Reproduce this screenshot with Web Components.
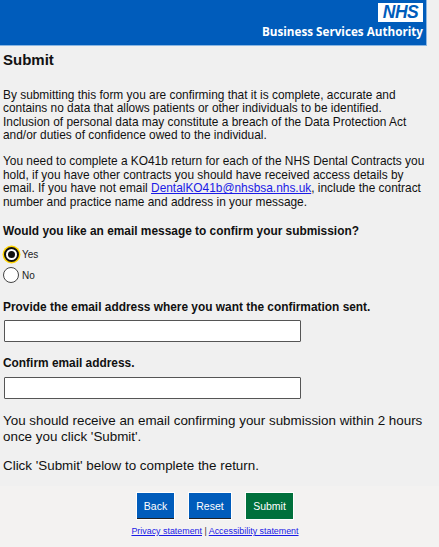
<!DOCTYPE html>
<html lang="en">
<head>
  <meta charset="UTF-8">
  <title>Submit</title>
  <style>
    html, body { margin: 0; padding: 0; background: #f0f0f0; }
    body { width: 439px; height: 547px; overflow: hidden; font-family: "Liberation Sans", Arial, sans-serif; color: #111; }
  </style>
</head>
<body>

<nhs-header></nhs-header>

<main-form>
  <h-title>Submit</h-title>
  <text-para style="--size:11.9px">By submitting this form you are confirming that it is complete, accurate and contains no data that allows patients or other individuals to be identified. Inclusion of personal data may constitute a breach of the Data Protection Act and/or duties of confidence owed to the individual.</text-para>
  <text-para style="--gap:12.75px;--size:11.9px">You need to complete a KO41b return for each of the NHS Dental Contracts you hold, if you have other contracts you should have received access details by email. If you have not email <a href="#" style="color:#1a1ae6">DentalKO41b@nhsbsa.nhs.uk</a>, include the contract number and practice name and address in your message.</text-para>
  <radio-group legend="Would you like an email message to confirm your submission?"></radio-group>
  <email-field label="Provide the email address where you want the confirmation sent." style="--top:13px;--under:5px"></email-field>
  <email-field label="Confirm email address." style="--top:13px;--under:6px"></email-field>
  <text-para style="--gap:14px;--size:13.4px;--lh:16px">You should receive an email confirming your submission within 2 hours once you click 'Submit'.</text-para>
  <text-para style="--gap:13px;--size:13.4px;--lh:16px">Click 'Submit' below to complete the return.</text-para>
</main-form>

<page-footer></page-footer>

<script>
  // Blue banner with the logo on the right
  class NhsHeader extends HTMLElement {
    constructor() {
      super();
      this.attachShadow({ mode: 'open' }).innerHTML = `
        <style>
          :host { display: flex; flex-direction: column; align-items: flex-end; box-sizing: border-box; width: 427px; height: 46px; background: #005cbb; color: #fff; padding: 3px 3px 0 0; border-bottom: 1px solid #8ab6e2; border-right: 1px solid #8ab6e2; }
          .logo { box-sizing: border-box; width: 45px; height: 19px; background: #fff; color: #005cbb; font: italic bold 17.5px/19px "Liberation Sans", Arial, sans-serif; text-align: center; letter-spacing: -0.5px; }
          .name { font: bold 11.7px/16px "Open Sans", "Liberation Sans", sans-serif; margin-top: 1px; white-space: nowrap; }
        </style>
        <div class="logo">NHS</div>
        <div class="name">Business Services Authority</div>`;
    }
  }

  // Column that holds the form content
  class MainForm extends HTMLElement {
    constructor() {
      super();
      this.attachShadow({ mode: 'open' }).innerHTML = `
        <style>
          :host { display: block; box-sizing: border-box; height: 440px; padding: 0 12px 0 3px; }
        </style>
        <slot></slot>`;
    }
  }

  class HTitle extends HTMLElement {
    constructor() {
      super();
      this.attachShadow({ mode: 'open' }).innerHTML = `
        <style>
          :host { display: block; font-size: 15px; font-weight: bold; line-height: 18px; padding-top: 5px; margin-bottom: 19.5px; }
        </style>
        <slot></slot>`;
    }
  }

  class TextPara extends HTMLElement {
    constructor() {
      super();
      this.attachShadow({ mode: 'open' }).innerHTML = `
        <style>
          :host { display: block; font-size: var(--size, 13px); line-height: var(--lh, 13.5px); margin-top: var(--gap, 0); }
        </style>
        <slot></slot>`;
    }
  }

  // Yes / No question, Yes is selected and focused
  class RadioGroup extends HTMLElement {
    constructor() {
      super();
      this.attachShadow({ mode: 'open' }).innerHTML = `
        <style>
          :host { display: block; margin-top: 13.75px; }
          .legend { font-size: 11.9px; font-weight: bold; line-height: 16px; margin-bottom: 4.5px; }
          .opt { display: flex; align-items: center; gap: 3px; height: 21px; font-size: 10px; color: #222; }
          .dot { box-sizing: border-box; width: 16px; height: 16px; border-radius: 50%; border: 1px solid #444; background: #fff; position: relative; }
          .on { border: 2px solid #111; box-shadow: 0 0 0 1.5px #ffd400; width: 15px; height: 15px; margin: 0 0.5px; }
          .on::after { content: ""; position: absolute; left: 2px; top: 2px; width: 7px; height: 7px; border-radius: 50%; background: #111; }
        </style>
        <div class="legend"></div>
        <div class="opt"><span class="dot on"></span>Yes</div>
        <div class="opt"><span class="dot"></span>No</div>`;
      this.shadowRoot.querySelector('.legend').textContent = this.getAttribute('legend');
    }
  }

  class EmailField extends HTMLElement {
    constructor() {
      super();
      this.attachShadow({ mode: 'open' }).innerHTML = `
        <style>
          :host { display: block; margin-top: var(--top, 13px); }
          label { display: block; font-size: 11.9px; font-weight: bold; line-height: 16px; margin-bottom: var(--under, 5px); }
          input { display: block; box-sizing: border-box; width: 297px; height: 22px; margin: 0 0 0 1px; padding: 0; background: #fff; border: 1px solid #555; border-radius: 1px; }
        </style>
        <label></label>
        <input type="text">`;
      this.shadowRoot.querySelector('label').textContent = this.getAttribute('label');
    }
  }

  // Buttons and the statement links at the bottom
  class PageFooter extends HTMLElement {
    constructor() {
      super();
      this.attachShadow({ mode: 'open' }).innerHTML = `
        <style>
          :host { display: block; box-sizing: border-box; height: 61px; background: #f3f2f1; text-align: center; padding-top: 7px; font-size: 8.9px; }
          .btns { display: flex; justify-content: center; gap: 15px; margin-left: -9px; }
          button { box-sizing: border-box; height: 26px; padding: 0; border: 0; border-bottom: 1px solid #222; background: #005cbb; color: #fff; font: 10.5px "Liberation Sans", Arial, sans-serif; outline: 1px solid #fff; }
          .go { background: #00703c; border-bottom: 0; }
          .links { margin-top: 6px; line-height: 12px; color: #333; margin-left: -9px; }
          a { color: #1a1ae6; }
        </style>
        <div class="btns">
          <button style="width:37px">Back</button>
          <button style="width:42px">Reset</button>
          <button class="go" style="width:47px">Submit</button>
        </div>
        <div class="links"><a href="#">Privacy statement</a> | <a href="#">Accessibility statement</a></div>`;
    }
  }

  customElements.define('nhs-header', NhsHeader);
  customElements.define('main-form', MainForm);
  customElements.define('h-title', HTitle);
  customElements.define('text-para', TextPara);
  customElements.define('radio-group', RadioGroup);
  customElements.define('email-field', EmailField);
  customElements.define('page-footer', PageFooter);
</script>

</body>
</html>
